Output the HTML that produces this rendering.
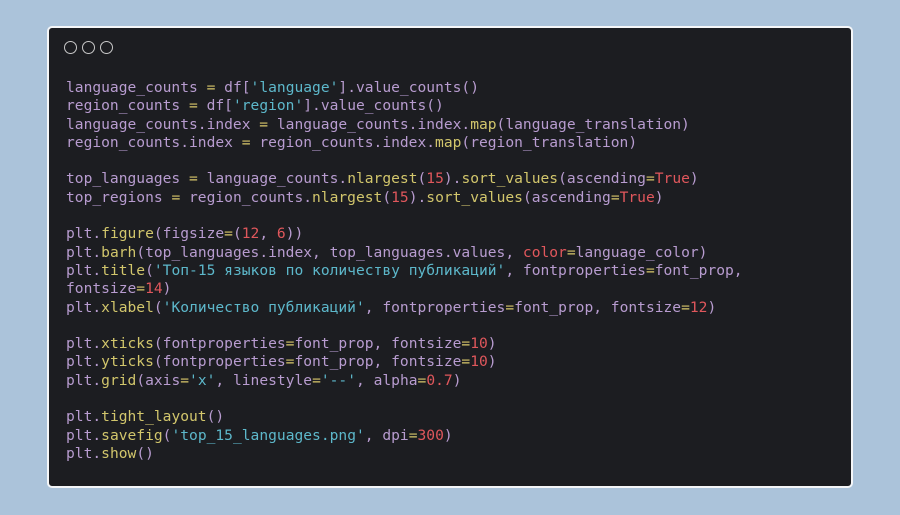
<!DOCTYPE html>
<html><head><meta charset="utf-8"><style>
html,body{margin:0;padding:0;}
body{width:900px;height:515px;background:#abc3da;position:relative;overflow:hidden;}
.card{position:absolute;left:47px;top:26px;width:802px;height:458px;background:#1c1d21;border:2px solid #f4f6f8;border-radius:5px;}
.dots{position:absolute;left:15px;top:13px;}
.dots span{display:inline-block;width:11px;height:11px;border:1px solid #c8c8c8;border-radius:50%;margin-right:5px;}
pre{position:absolute;left:17px;top:51px;margin:0;font-family:"DejaVu Sans Mono","Liberation Mono",monospace;font-size:14.6px;line-height:18.3px;color:#b89cd0;}
.m{color:#d2c66c}.s{color:#5db8cb}.n{color:#e0575c}.e{color:#d9c86a}
</style></head><body>
<div class="card"><div class="dots"><span></span><span></span><span></span></div>
<pre>language_counts <span class="e">=</span> df[<span class="s">'language'</span>].value_counts()
region_counts <span class="e">=</span> df[<span class="s">'region'</span>].value_counts()
language_counts.index <span class="e">=</span> language_counts.index.<span class="m">map</span>(language_translation)
region_counts.index <span class="e">=</span> region_counts.index.<span class="m">map</span>(region_translation)

top_languages <span class="e">=</span> language_counts.<span class="m">nlargest</span>(<span class="n">15</span>).<span class="m">sort_values</span>(ascending<span class="e">=</span><span class="n">True</span>)
top_regions <span class="e">=</span> region_counts.<span class="m">nlargest</span>(<span class="n">15</span>).<span class="m">sort_values</span>(ascending<span class="e">=</span><span class="n">True</span>)

plt.<span class="m">figure</span>(figsize<span class="e">=</span>(<span class="n">12</span>, <span class="n">6</span>))
plt.<span class="m">barh</span>(top_languages.index, top_languages.values, <span class="n">color</span><span class="e">=</span>language_color)
plt.<span class="m">title</span>(<span class="s">'Топ-15 языков по количеству публикаций'</span>, fontproperties<span class="e">=</span>font_prop,
fontsize<span class="e">=</span><span class="n">14</span>)
plt.<span class="m">xlabel</span>(<span class="s">'Количество публикаций'</span>, fontproperties<span class="e">=</span>font_prop, fontsize<span class="e">=</span><span class="n">12</span>)

plt.<span class="m">xticks</span>(fontproperties<span class="e">=</span>font_prop, fontsize<span class="e">=</span><span class="n">10</span>)
plt.<span class="m">yticks</span>(fontproperties<span class="e">=</span>font_prop, fontsize<span class="e">=</span><span class="n">10</span>)
plt.<span class="m">grid</span>(axis<span class="e">=</span><span class="s">'x'</span>, linestyle<span class="e">=</span><span class="s">'--'</span>, alpha<span class="e">=</span><span class="n">0.7</span>)

plt.<span class="m">tight_layout</span>()
plt.<span class="m">savefig</span>(<span class="s">'top_15_languages.png'</span>, dpi<span class="e">=</span><span class="n">300</span>)
plt.<span class="m">show</span>()</pre></div>
</body></html>
